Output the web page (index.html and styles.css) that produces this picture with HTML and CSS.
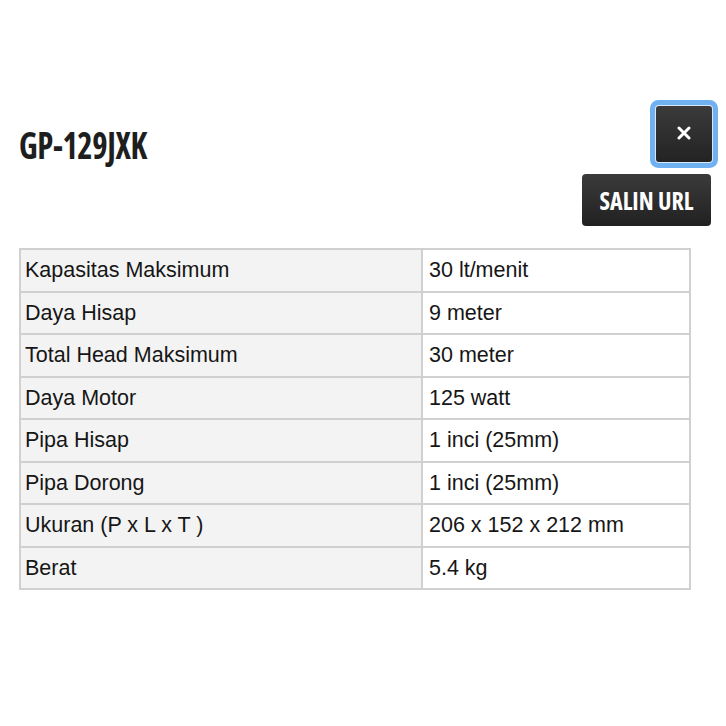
FILE: index.html
```html
<!DOCTYPE html>
<html>
<head>
<meta charset="utf-8">
<link rel="stylesheet" href="styles.css">
</head>
<body>
<div class="page">
  <div class="top">
    <h1 class="title">GP-129JXK</h1>
    <div class="actions">
      <button class="btn-close" aria-label="Tutup"><svg width="14" height="14" viewBox="0 0 14 14"><path d="M2 2 L12 12 M12 2 L2 12" stroke="#fff" stroke-width="3" stroke-linecap="round"/></svg></button>
      <button class="btn-copy">SALIN URL</button>
    </div>
  </div>
  <table class="specs">
    <tr><td class="k">Kapasitas Maksimum</td><td class="v">30 lt/menit</td></tr>
    <tr><td class="k">Daya Hisap</td><td class="v">9 meter</td></tr>
    <tr><td class="k">Total Head Maksimum</td><td class="v">30 meter</td></tr>
    <tr><td class="k">Daya Motor</td><td class="v">125 watt</td></tr>
    <tr><td class="k">Pipa Hisap</td><td class="v">1 inci (25mm)</td></tr>
    <tr><td class="k">Pipa Dorong</td><td class="v">1 inci (25mm)</td></tr>
    <tr><td class="k">Ukuran (P x L x T )</td><td class="v">206 x 152 x 212 mm</td></tr>
    <tr><td class="k">Berat</td><td class="v">5.4 kg</td></tr>
  </table>
</div>
</body>
</html>
```
FILE: styles.css
```css
html, body {
  margin: 0;
  padding: 0;
  background: #fff;
}
.page {
  padding: 106px 14px 0 19px;
}
.top {
  display: flex;
  justify-content: space-between;
  align-items: flex-start;
}
.title {
  margin: 18px 0 0 0;
  font-family: "Open Sans", sans-serif;
  font-stretch: 75%;
  font-weight: 700;
  font-size: 38px;
  line-height: 40px;
  color: #1e1e1e;
  letter-spacing: -0.5px;
  transform: scaleX(0.86);
  transform-origin: left center;
}
.actions {
  display: flex;
  flex-direction: column;
  align-items: flex-end;
  gap: 12px;
}
.btn-close {
  width: 56px;
  height: 56px;
  border: none;
  border-radius: 3px;
  background: linear-gradient(#3c3b3b, #242323);
  padding: 0;
  display: flex;
  align-items: center;
  justify-content: center;
  box-shadow: 0 0 0 1px #d6e8f9, 0 0 0 6px #70b2f1;
}
.btn-close svg {
  display: block;
  margin-top: -2px;
}
.btn-copy {
  width: 129px;
  height: 52px;
  border: none;
  border-radius: 4px;
  background: linear-gradient(#3c3b3b, #222121);
  color: #fff;
  font-family: "Open Sans", sans-serif;
  font-stretch: 75%;
  font-weight: 700;
  font-size: 24px;
  padding: 0;
  margin-right: 1px;
}
.specs {
  margin-top: 22px;
  width: 672px;
  border-collapse: collapse;
  font-family: "Liberation Sans", Arial, sans-serif;
  font-size: 21.5px;
  color: #161616;
}
.specs td {
  border: 2px solid #d0d0d0;
  height: 40.5px;
  padding: 0 4px;
  line-height: 24px;
}
.specs .k {
  width: 392px;
  background: #f3f3f3;
}
.specs .v {
  background: #fff;
  padding-left: 6px;
}
```
